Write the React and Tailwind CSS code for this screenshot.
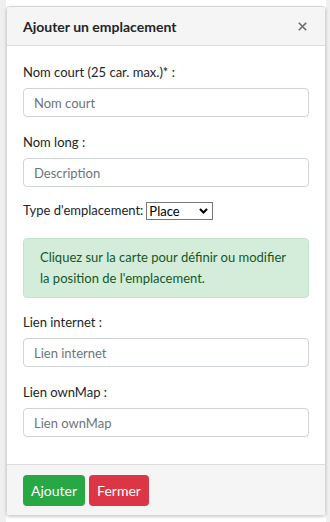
import { useState } from 'react';

function Field({ label, placeholder }) {
  return (
    <div className="mb-[15px]">
      <label className="block mb-[6px] leading-[20px]">{label}</label>
      <input
        type="text"
        placeholder={placeholder}
        className="block w-full h-[29px] px-[10px] border border-[#ced4da] rounded-[4px] bg-white text-[13px] text-[#495057] placeholder:text-[#6c757d] outline-none"
      />
    </div>
  );
}

export default function App() {
  const [type, setType] = useState('Place');

  return (
    <div className="min-h-screen bg-[#efefef] pl-[6px] pr-[4px] text-[13px] text-[#212529]" style={{ fontFamily: 'Lato, "Noto Sans", sans-serif' }}>
      <div className="bg-white min-h-screen pt-[6px] pb-[6px]">
        <div className="border border-[#d6d6d6] rounded-[4px] shadow-[0_1px_3px_rgba(0,0,0,0.2)] overflow-hidden">
          <div className="flex items-center justify-between h-[39px] pl-[16px] pr-[18px] bg-[#f5f5f5] border-b border-[#dcdcdc]">
            <h1 className="font-bold text-[14px] text-[#212529]">Ajouter un emplacement</h1>
            <button className="text-[#6b6b6b]" aria-label="Fermer">
              <svg width="9" height="9" viewBox="0 0 9 9" fill="none" stroke="currentColor" strokeWidth="1.6">
                <path d="M0.8 0.8 L8.2 8.2 M8.2 0.8 L0.8 8.2" />
              </svg>
            </button>
          </div>

          <div className="px-[16px] pt-[16px] pb-[12px]">
            <Field label="Nom court (25 car. max.)* :" placeholder="Nom court" />
            <Field label="Nom long :" placeholder="Description" />

            <div className="flex items-center h-[20px] mb-[17px] -mt-[1px]">
              <span>Type d'emplacement:</span>
              <div className="relative ml-[3px]">
                <select
                  value={type}
                  onChange={(e) => setType(e.target.value)}
                  className="appearance-none block h-[18px] w-[67px] border border-[#767676] text-[13px] leading-[16px] pl-[2px] bg-white text-black rounded-none"
                >
                  <option>Place</option>
                  <option>Bâtiment</option>
                  <option>Salle</option>
                </select>
                <svg className="absolute right-[5px] top-[6px] pointer-events-none" width="9" height="6" viewBox="0 0 9 6" fill="none" stroke="#000" strokeWidth="2">
                  <path d="M1 1 L4.5 4.5 L8 1" />
                </svg>
              </div>
            </div>

            <div className="bg-[#d4edda] border border-[#c3e6cb] text-[#155724] rounded-[4px] px-[16px] py-[8px] leading-[21px] mb-[14px]">
              Cliquez sur la carte pour définir ou modifier la position de l'emplacement.
            </div>

            <Field label="Lien internet :" placeholder="Lien internet" />
            <Field label="Lien ownMap :" placeholder="Lien ownMap" />
          </div>

          <div className="flex gap-[4px] px-[16px] pt-[10px] pb-[9px] bg-[#f5f5f5] border-t border-[#dcdcdc]">
            <button className="h-[31px] w-[62px] bg-[#28a745] text-white text-[14px] rounded-[4px]">Ajouter</button>
            <button className="h-[31px] w-[60px] bg-[#dc3545] text-white text-[14px] rounded-[4px]">Fermer</button>
          </div>
        </div>
      </div>
    </div>
  );
}
